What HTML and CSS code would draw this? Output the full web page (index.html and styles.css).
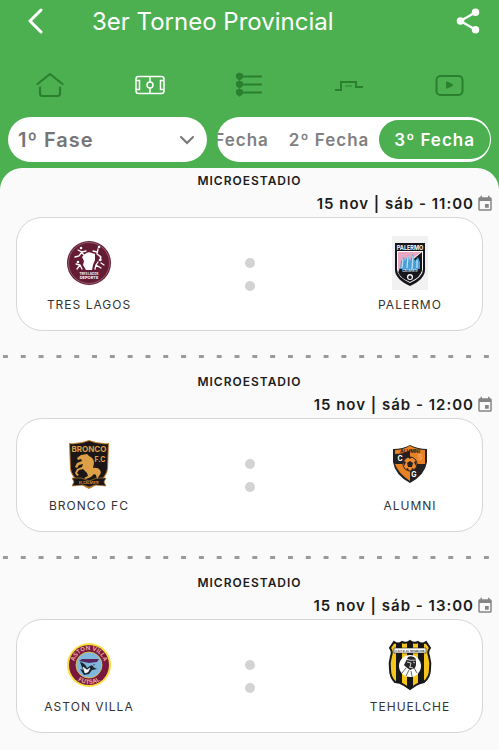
FILE: index.html
```html
<!DOCTYPE html>
<html lang="es">
<head>
  <meta charset="UTF-8">
  <meta name="viewport" content="width=device-width, initial-scale=1">
  <title>3er Torneo Provincial</title>
  <link rel="stylesheet" href="styles.css">
</head>
<body>
  <svg class="sprite" aria-hidden="true">
    <symbol id="calendar" viewBox="0 0 24 24">
      <path d="M17 12h-5v5h5v-5zM16 1v2H8V1H6v2H5c-1.1 0-2 .9-2 2v14c0 1.1.9 2 2 2h14c1.1 0 2-.9 2-2V5c0-1.1-.9-2-2-2h-1V1h-2zm3 18H5V8h14v11z" fill="currentColor"/>
    </symbol>
  </svg>

  <header class="header">
    <div class="topbar">
      <button class="icon-btn" aria-label="Volver">
        <svg width="16" height="26" viewBox="0 0 16 26" fill="none" stroke="#fff" stroke-width="3" stroke-linecap="round" stroke-linejoin="round"><path d="M13 2 2 13l11 11"/></svg>
      </button>
      <h1>3er Torneo Provincial</h1>
      <button class="icon-btn" aria-label="Compartir">
        <svg width="30" height="30" viewBox="0 0 24 24" fill="#fff"><path d="M18 5 6 12l12 7" fill="none" stroke="#fff" stroke-width="1.8"/><circle cx="18" cy="5" r="3"/><circle cx="6" cy="12" r="3"/><circle cx="18" cy="19" r="3"/></svg>
      </button>
    </div>

    <nav class="tabs">
      <a href="#inicio" aria-label="Inicio">
        <svg width="30" height="30" viewBox="0 0 30 30" fill="none" stroke="currentColor" stroke-width="2.2" stroke-linecap="round" stroke-linejoin="round"><path d="M2.500 14 15 4l12.500 10M5 17.500v6q0 2.500 2.500 2.500h15q2.500 0 2.500-2.500v-6"/></svg>
      </a>
      <a href="#partidos" class="active" aria-label="Partidos">
        <svg width="30" height="30" viewBox="0 0 30 30" fill="none" stroke="currentColor" stroke-width="1.5"><rect x="1" y="6.5" width="28" height="17" rx="2.500"/><path d="M15 6.500v5.500M15 18v5.500M1 10.500h3.500v9H1M29 10.500h-3.500v9H29"/><circle cx="15" cy="15" r="3"/></svg>
      </a>
      <a href="#posiciones" aria-label="Posiciones">
        <svg width="30" height="30" viewBox="0 0 30 30" fill="currentColor" stroke="currentColor" stroke-width="1.8"><path d="M8 6.500h20M8 14.500h20M8 22.500h20"/><path d="M3 4.500 5.500 3.500 8 4.500v3L5.500 9.500 3 7.500zM3 12.500l2.500-1 2.500 1v3l-2.500 2-2.500-2zM3 20.500l2.500-1 2.500 1v3l-2.500 2-2.500-2z"/></svg>
      </a>
      <a href="#llaves" aria-label="Llaves">
        <svg width="30" height="30" viewBox="0 0 30 30" fill="none" stroke="currentColor" stroke-width="2"><path d="M1 20h6v-8h15v5h7"/><path d="M11 16h7" stroke-width="1"/></svg>
      </a>
      <a href="#videos" aria-label="Videos">
        <svg width="30" height="30" viewBox="0 0 30 30" fill="none" stroke="currentColor" stroke-width="2"><rect x="2.5" y="6" width="26" height="19" rx="4"/><path d="M13 12.500v5l5-2.500z" fill="currentColor" stroke-linejoin="round"/></svg>
      </a>
    </nav>

    <div class="filters">
      <div class="fase">
        <select aria-label="Fase">
          <option>1º Fase</option>
        </select>
        <svg width="16" height="10" viewBox="0 0 16 10" fill="none" stroke="#757575" stroke-width="2" stroke-linecap="round"><path d="m2 2 6 6 6-6"/></svg>
      </div>
      <div class="fechas">
        <button>1º Fecha</button>
        <button>2º Fecha</button>
        <button class="selected">3º Fecha</button>
      </div>
    </div>
  </header>

  <main class="matches">
    <section class="match">
      <h2>MICROESTADIO</h2>
      <p class="date">15 nov | sáb - 11:00 <svg width="18" height="18"><use href="#calendar"/></svg></p>
      <div class="card">
        <div class="team">
          <svg width="48" height="48" viewBox="0 0 48 48">
            <circle cx="24" cy="24" r="22" fill="#641c34"/>
            <circle cx="24" cy="24" r="20.5" fill="none" stroke="#a87985" stroke-width=".7"/>
            <path d="M20 15q3-3 7-1l3 1v6l-2 5-1 5h-6l-3-5 1-4-2-4z" fill="#fff"/>
            <g fill="none" stroke="#fff" stroke-width="1.3" stroke-linecap="round"><path d="m13 11 4 2 4-1M17 13l-3 4-4 1M17 14l3 3M33 10l-1 5 4 3M32 13l-4-1M35 17l1 4M11 25l4 1 2 4M15 26l-3 4M33 23l-2 3 5 3M31 26l-1 4M36 24l3 2"/></g>
            <g fill="#fff"><circle cx="16" cy="9" r="1.3"/><circle cx="34" cy="8" r="1.3"/><circle cx="13" cy="23" r="1.3"/><circle cx="35" cy="21" r="1.3"/></g>
            <text x="24" y="35.5" class="crest-text" font-size="3" fill="#fff">TRES LAGOS</text>
            <text x="24" y="39.5" class="crest-text" font-size="4" fill="#fff">DEPORTE</text>
          </svg>
          <span>TRES LAGOS</span>
        </div>
        <div class="dots"><i></i><i></i></div>
        <div class="team">
          <svg width="48" height="54" viewBox="0 0 48 54">
            <path d="M6 0h36v54H6z" fill="#f1f1f2"/>
            <path d="M9 7h30v27q0 9-15 16Q9 43 9 34z" fill="#16151b"/>
            <path d="M11 15h26v18q0 8-13 14-13-6-13-14z" fill="#fff"/>
            <path d="M12 16h23L12 34z" fill="#e9a8c2"/>
            <path d="M36 16v18q-1 7-12 12-10-4-12-10z" fill="#17171c"/>
            <path d="m14 34 1-9 3-4 1 4 3-6 2 6 3-7 2 7 3-4 2 5v9q-10 3-20-1z" fill="#4c9ed5"/>
            <path d="m17 23-1 9M22 20l-1 12M27 20l-1 13M31 24v8" stroke="#b5e1f4" stroke-width="1.3"/>
            <path d="M13 34q11 4 22 0" stroke="#16151b" stroke-width="3" fill="none"/>
            <text x="24" y="36" class="crest-text" font-size="3" fill="#ddd">CALAFATE</text>
            <circle cx="24" cy="41" r="3" fill="#fff"/><path d="m24 39 2 2-1 2h-2l-1-2z" fill="#222"/>
            <path d="M9 8h30v6H9z" fill="#16151b"/>
            <text x="24" y="13.5" class="crest-text" font-size="5.5" fill="#fff">PALERMO</text>
          </svg>
          <span>PALERMO</span>
        </div>
      </div>
    </section>

    <section class="match">
      <h2>MICROESTADIO</h2>
      <p class="date">15 nov | sáb - 12:00 <svg width="18" height="18"><use href="#calendar"/></svg></p>
      <div class="card">
        <div class="team">
          <svg width="48" height="54" viewBox="0 0 48 54">
            <path d="M4 6q10 1 20-3 10 4 20 3l-1 26q-2 12-19 20Q7 44 5 32z" fill="#b97a2c"/>
            <path d="M5 7q10 1 19-3 9 4 19 3l-1 25q-2 11-18 18Q8 43 6 32z" fill="#1b1718"/>
            <path d="M7 41h9l8 3 8-3h9l-2 4 2 4-11-1-6 2-6-2-11 1 2-4z" fill="#1b1718" stroke="#b97a2c" stroke-width=".7"/>
            <path d="m22 17 2 2q5 2 5 7l-1 5q5-1 7 2 2 3-1 6l-2 3-1-4-2-1-3 3-5 2-2-1 4-2-1-3-4-4-4 1-2 3 2 2-2 1-2-3 2-4 5-2 1-3-4 1-2 3-2-1 2-4 5-2-1-2-3 1-1-2 4-3z" fill="#dda046"/>
            <text x="24" y="15" class="crest-text" font-size="8" fill="#dda046">BRONCO</text>
            <text x="35" y="25" class="crest-text" font-size="7" fill="#dda046">F.C</text>
            <text x="24" y="47" class="crest-text" font-size="3" fill="#dda046">EL CALAFATE</text>
          </svg>
          <span>BRONCO FC</span>
        </div>
        <div class="dots"><i></i><i></i></div>
        <div class="team">
          <svg width="48" height="48" viewBox="0 0 48 48">
            <path d="M7 9q10 0 17-4 8 4 17 4v13q-2 13-17 21Q9 35 7 22z" fill="#252022"/>
            <path d="M24 11h15v13H24zM9 24h15v17Q12 33 9 24z" fill="#e98224"/>
            <path d="M9 12q8 0 15-4 8 4 15 4" stroke="#e98224" stroke-width="4" fill="none"/>
            <circle cx="24" cy="24" r="7" fill="#f08b29" stroke="#252022" stroke-width="1"/>
            <path d="m24 21 3 2-1 4h-4l-1-4zM22 17h4l-2 2zM18 21l2 1-2 4zM30 21l-2 1 2 4zM20 29l2-1 1 3zM28 29l-2-1-1 3z" fill="#252022"/>
            <text x="24" y="12.5" class="crest-text" font-size="5" fill="#252022">ALUMNI</text>
            <text x="14" y="21" class="crest-text" font-size="7" fill="#fff">C</text>
            <text x="34" y="20" class="crest-text" font-size="7" fill="#f4a65e">S</text>
            <text x="28" y="37" class="crest-text" font-size="7" fill="#fff">G</text>
          </svg>
          <span>ALUMNI</span>
        </div>
      </div>
    </section>

    <section class="match">
      <h2>MICROESTADIO</h2>
      <p class="date">15 nov | sáb - 13:00 <svg width="18" height="18"><use href="#calendar"/></svg></p>
      <div class="card">
        <div class="team">
          <svg width="48" height="48" viewBox="0 0 48 48">
            <defs>
              <path id="arcTop" d="M12 33a15 15 0 1 1 24 0"/>
              <path id="arcBottom" d="M5 24a19 19 0 0 0 38 0"/>
            </defs>
            <circle cx="24" cy="24" r="22" fill="#f7df3f"/>
            <circle cx="24" cy="24" r="20" fill="#79183d"/>
            <circle cx="24" cy="24" r="13" fill="#80b7dc" stroke="#e5c64a" stroke-width=".8"/>
            <path d="m14 20 3-2h17l-2 3-8 1-5-1z" fill="#59245e"/>
            <path d="M15 21q5 1 7 6l3-2 5-2-2 3 4 2-5 1-3 4-5 1-4-6 3 1z" fill="#18242f"/>
            <path d="m18 26 4 3 3-2-2 4-3 1zM27 24l2 1" fill="#fff" stroke="#fff" stroke-width=".6"/>
            <text class="crest-text" font-size="6" fill="#e5aa9d"><textPath href="#arcTop" startOffset="50%">ASTON VILLA</textPath></text>
            <text class="crest-text" font-size="6" fill="#e5aa9d"><textPath href="#arcBottom" startOffset="50%">FUTSAL</textPath></text>
          </svg>
          <span>ASTON VILLA</span>
        </div>
        <div class="dots"><i></i><i></i></div>
        <div class="team">
          <svg width="48" height="54" viewBox="0 0 48 54">
            <defs>
              <clipPath id="shield"><path d="M8 4q4 3 8 0 4 2 8-1 4 3 8 1 4 3 8 0l4 6q-3 4-1 8 2 7 1 13 0 8-6 13-5 1-8 3l-6 4-6-4q-4-3-9-3-5-5-5-13-1-6 1-13 2-4-1-8z"/></clipPath>
            </defs>
            <g clip-path="url(#shield)">
              <path d="M0 0h48v54H0z" fill="#f5c51d"/>
              <path d="M10 0h6v54h-6zM21 0h6v54h-6zM32 0h6v54h-6z" fill="#171717"/>
            </g>
            <path d="M8 4q4 3 8 0 4 2 8-1 4 3 8 1 4 3 8 0l4 6q-3 4-1 8 2 7 1 13 0 8-6 13-5 1-8 3l-6 4-6-4q-4-3-9-3-5-5-5-13-1-6 1-13 2-4-1-8z" fill="none" stroke="#171717" stroke-width="2"/>
            <path d="M8 10h32v5H8z" fill="#fff" stroke="#171717" stroke-width=".6"/>
            <text x="24" y="13.5" class="crest-text" font-size="2.5" fill="#171717">C.S.Y D. AL TEHUELCHE</text>
            <circle cx="24" cy="28" r="11" fill="#fff"/>
            <path d="m20 23 2-4q5-2 8 2v6l-1 3-5 2-4-3-2-2z" fill="#272727"/>
            <path d="M19 21q5 2 12 1M21 24l4 1-1 4M27 24l2 1M23 29l4 1" fill="none" stroke="#fff" stroke-width=".8"/>
            <path d="m20 30-4 5M28 30l3 5M23 32l-3 6M25 33l1 5" stroke="#666" stroke-width="1"/>
          </svg>
          <span>TEHUELCHE</span>
        </div>
      </div>
    </section>
  </main>
</body>
</html>
```
FILE: styles.css
```css
* {
  box-sizing: border-box;
}
body {
  margin: 0;
  min-height: 100vh;
  display: flex;
  flex-direction: column;
  font-family: Inter, "Liberation Sans", sans-serif;
  background-color: #4caf50;
  color: #1c1c1c;
}
h1, h2, p {
  margin: 0;
}
button {
  padding: 0;
  border: none;
  background: none;
  font-family: inherit;
  cursor: pointer;
}
svg {
  display: block;
  flex-shrink: 0;
}
.sprite {
  display: none;
}

/* header */
.topbar {
  display: flex;
  align-items: center;
  height: 42px;
  padding: 0 16px 0 28px;
}
.topbar h1 {
  flex: 1;
  margin-left: 48px;
  font-size: 24px;
  font-weight: 400;
  color: #fff;
}
.tabs {
  display: grid;
  grid-template-columns: repeat(5, 1fr);
  justify-items: center;
  margin-top: 28px;
}
.tabs a {
  color: #2b802f;
}
.tabs a.active {
  color: #fff;
}
.filters {
  display: grid;
  grid-template-columns: 8fr 11fr;
  gap: 10px;
  padding: 17px 8px 6px;
}
.fase, .fechas {
  display: flex;
  align-items: center;
  height: 45px;
  border-radius: 23px;
  background-color: #fff;
  overflow: hidden;
}
.fase {
  display: grid;
  grid-template-columns: 1fr 28px;
}
.fase select {
  grid-area: 1 / 1 / 2 / 3;
  height: 100%;
  padding: 0 10px;
  border: none;
  appearance: none;
  background: none;
  font-family: inherit;
  font-size: 20px;
  font-weight: 600;
  letter-spacing: 1px;
  color: #757575;
}
.fase svg {
  grid-area: 1 / 2;
  pointer-events: none;
}
.fechas {
  justify-content: flex-end;
  padding-right: 1px;
}
.fechas button {
  flex-shrink: 0;
  height: 39px;
  padding: 0 10px;
  border-radius: 20px;
  font-size: 17px;
  font-weight: 600;
  letter-spacing: 1px;
  color: #808080;
}
.fechas .selected {
  padding: 0 15px;
  background-color: #4caf50;
  color: #fff;
}

/* matches */
.matches {
  flex: 1;
  border-radius: 22px 22px 0 0;
  background-color: #fafafa;
}
.match h2 {
  font-size: 12px;
  font-weight: 600;
  line-height: 26px;
  letter-spacing: 1px;
  text-align: center;
}
.date {
  display: flex;
  justify-content: flex-end;
  align-items: center;
  gap: 2px;
  padding-right: 5px;
  font-size: 15px;
  font-weight: 600;
  line-height: 20px;
  letter-spacing: 1px;
}
.date svg {
  color: #858585;
}
.card {
  display: flex;
  justify-content: space-between;
  align-items: center;
  height: 114px;
  margin: 3px 16px 0;
  border: 1px solid #d6d6d6;
  border-radius: 26px;
  background-color: #fff;
}
.team {
  display: grid;
  grid-template-rows: 54px 20px;
  gap: 4px;
  width: 144px;
  padding-top: 2px;
  place-items: center;
  font-size: 12px;
  letter-spacing: 1px;
  color: #333;
}
.crest-text {
  font-weight: 700;
  letter-spacing: 0;
  text-anchor: middle;
}
.dots {
  display: grid;
  gap: 13px;
}
.dots i {
  width: 10px;
  height: 10px;
  border-radius: 50%;
  background-color: #d3d3d3;
}

/* dashed line between matches */
.match:not(:last-child)::after {
  content: "";
  display: block;
  height: 3px;
  margin: 24px 0 11px;
  background-image: linear-gradient(90deg, transparent 15%, #9a9a9a 15%, #9a9a9a 44%, transparent 44%);
  background-size: 18px 3px;
  background-repeat: round;
}
```
